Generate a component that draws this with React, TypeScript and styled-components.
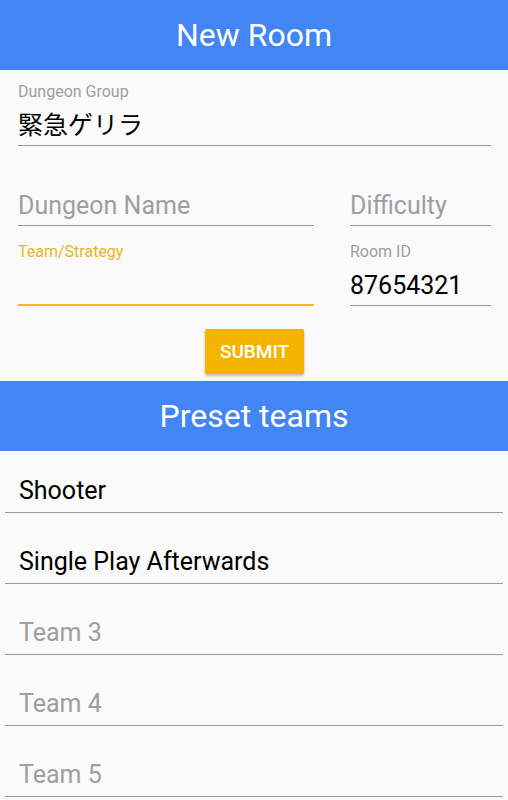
import styled, { createGlobalStyle } from 'styled-components';

const GlobalStyle = createGlobalStyle`
  html, body {
    margin: 0;
    padding: 0;
    background: #fafafa;
    font-family: Roboto, 'Noto Sans CJK JP', sans-serif;
  }
`;

interface FieldProps {
  focused?: boolean;
}

interface TextProps {
  placeholder?: boolean;
}

const Page = styled.div`
  width: 508px;
  min-height: 800px;
  background: #fafafa;
`;

const Bar = styled.header`
  height: 70px;
  background: #4285f4;
  color: #fff;
  display: flex;
  align-items: center;
  justify-content: center;
  font-size: 32px;
  font-weight: 400;
`;

const Form = styled.form`
  padding: 12px 17px 0 18px;
  display: flex;
  flex-direction: column;
`;

const Row = styled.div<{ top: number }>`
  display: grid;
  grid-template-columns: 296px 141px;
  column-gap: 36px;
  align-items: end;
  margin-top: ${({ top }) => top}px;
`;

const Field = styled.div<FieldProps>`
  display: flex;
  flex-direction: column;
  gap: 8px;
  padding-bottom: ${({ focused }) => (focused ? '2px' : '3px')};
  border-bottom: ${({ focused }) =>
    focused ? '2px solid #f2b925' : '1px solid #9a9a9a'};
`;

const Label = styled.label<FieldProps>`
  font-size: 16px;
  line-height: 20px;
  color: ${({ focused }) => (focused ? '#e8b71c' : '#9e9e9e')};
`;

const Value = styled.div<TextProps>`
  font-size: 25px;
  line-height: 32px;
  height: 32px;
  color: ${({ placeholder }) => (placeholder ? '#9e9e9e' : '#000')};
`;

const Actions = styled.div`
  display: flex;
  justify-content: center;
  margin: 23px 0 7px;
`;

const Submit = styled.button`
  width: 99px;
  height: 45px;
  border: none;
  border-radius: 2px;
  background: #f4b400;
  color: #fff;
  font-family: Roboto, sans-serif;
  font-size: 19px;
  font-weight: 500;
  box-shadow: 0 2px 3px rgba(0, 0, 0, 0.25);
`;

const List = styled.ul`
  list-style: none;
  margin: 0;
  padding: 0 5px;
`;

const Item = styled.li<TextProps>`
  height: 70px;
  box-sizing: content-box;
  display: flex;
  align-items: flex-end;
  padding: 0 14px;
  border-bottom: 1px solid #9a9a9a;
  font-size: 25px;
  color: ${({ placeholder }) => (placeholder ? '#9e9e9e' : '#000')};

  &:first-child {
    height: 61px;
  }

  span {
    line-height: 32px;
    margin-bottom: 5px;
  }
`;

const teams = [
  { name: 'Shooter', set: true },
  { name: 'Single Play Afterwards', set: true },
  { name: 'Team 3', set: false },
  { name: 'Team 4', set: false },
  { name: 'Team 5', set: false },
];

export default function App() {
  return (
    <Page>
      <GlobalStyle />
      <Bar>New Room</Bar>
      <Form onSubmit={(e) => e.preventDefault()}>
        <Field>
          <Label>Dungeon Group</Label>
          <Value>緊急ゲリラ</Value>
        </Field>
        <Row top={44}>
          <Field>
            <Value placeholder>Dungeon Name</Value>
          </Field>
          <Field>
            <Value placeholder>Difficulty</Value>
          </Field>
        </Row>
        <Row top={16}>
          <Field focused>
            <Label focused>Team/Strategy</Label>
            <Value />
          </Field>
          <Field>
            <Label>Room ID</Label>
            <Value>87654321</Value>
          </Field>
        </Row>
        <Actions>
          <Submit type="submit">SUBMIT</Submit>
        </Actions>
      </Form>
      <Bar>Preset teams</Bar>
      <List>
        {teams.map((t) => (
          <Item key={t.name} placeholder={!t.set}>
            <span>{t.name}</span>
          </Item>
        ))}
      </List>
    </Page>
  );
}
